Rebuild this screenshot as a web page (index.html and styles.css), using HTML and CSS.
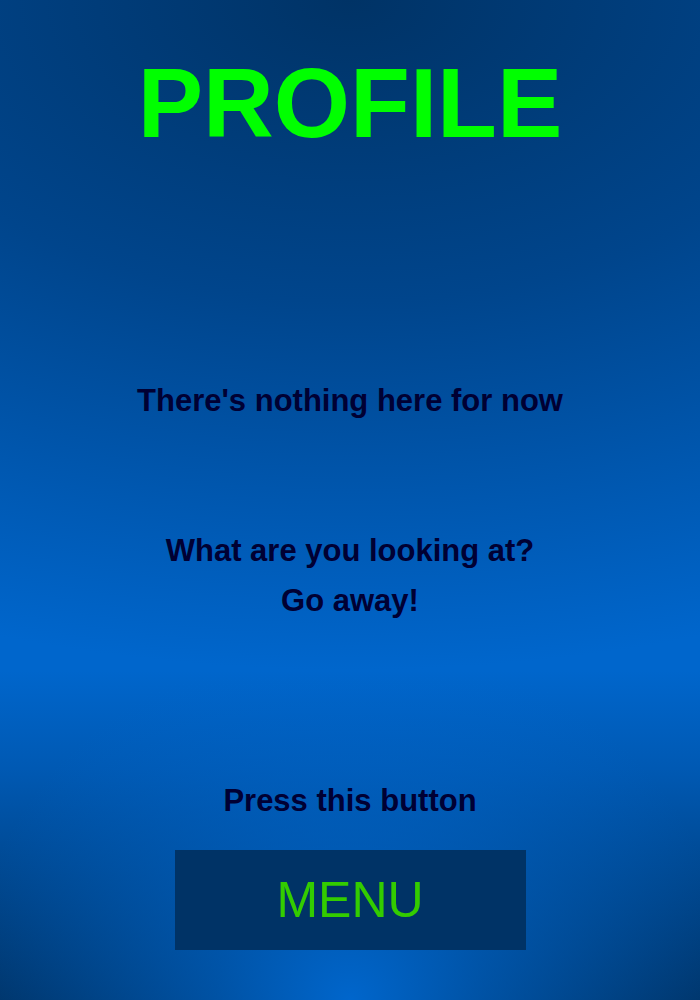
FILE: index.html
```html
<!DOCTYPE html>
<html lang="en">
<head>
<meta charset="utf-8">
<title>Profile</title>
<link rel="stylesheet" href="styles.css">
</head>
<body>
<main class="page">
  <h1 class="title">PROFILE</h1>
  <p class="note note-first">There's nothing here for now</p>
  <div class="note-group">
    <p class="note">What are you looking at?</p>
    <p class="note">Go away!</p>
  </div>
  <p class="note note-press">Press this button</p>
  <button class="menu-btn" type="button">MENU</button>
</main>
</body>
</html>
```

FILE: styles.css
```css
html, body {
  margin: 0;
  padding: 0;
}

body {
  width: 700px;
  height: 1000px;
  overflow: hidden;
  font-family: "Comic Sans MS", "Liberation Sans", Arial, sans-serif;
  background:
    radial-gradient(ellipse 55% 110% at 50% 100%, rgba(0, 102, 204, 1), rgba(0, 102, 204, 0.6) 35%, rgba(0, 102, 204, 0) 100%) bottom / 100% 33% no-repeat,
    linear-gradient(#0066cc, #0059b3 30%, #003366) bottom / 100% 33% no-repeat,
    radial-gradient(ellipse 160% 100% at 50% 0%, #003366, #00458c 45%, #0066cc) top / 100% 67% no-repeat;
  background-color: #003366;
}

.page {
  display: flex;
  flex-direction: column;
  align-items: center;
  padding-top: 54px;
}

.title {
  margin: 0;
  font-size: 98px;
  line-height: 98px;
  font-weight: bold;
  color: #00ff00;
}

.note {
  margin: 0;
  font-size: 31px;
  line-height: 50px;
  font-weight: bold;
  color: #000033;
  text-align: center;
}

.note-first {
  margin-top: 224px;
}

.note-group {
  margin-top: 100px;
  display: flex;
  flex-direction: column;
  align-items: center;
}

.note-press {
  margin-top: 150px;
}

.menu-btn {
  margin-top: 24px;
  width: 351px;
  height: 100px;
  border: none;
  padding: 0;
  background: #003366;
  color: #33cc00;
  font-family: "Comic Sans MS", "Liberation Sans", Arial, sans-serif;
  font-size: 50px;
  font-weight: normal;
  display: flex;
  align-items: center;
  justify-content: center;
  cursor: pointer;
}
```
